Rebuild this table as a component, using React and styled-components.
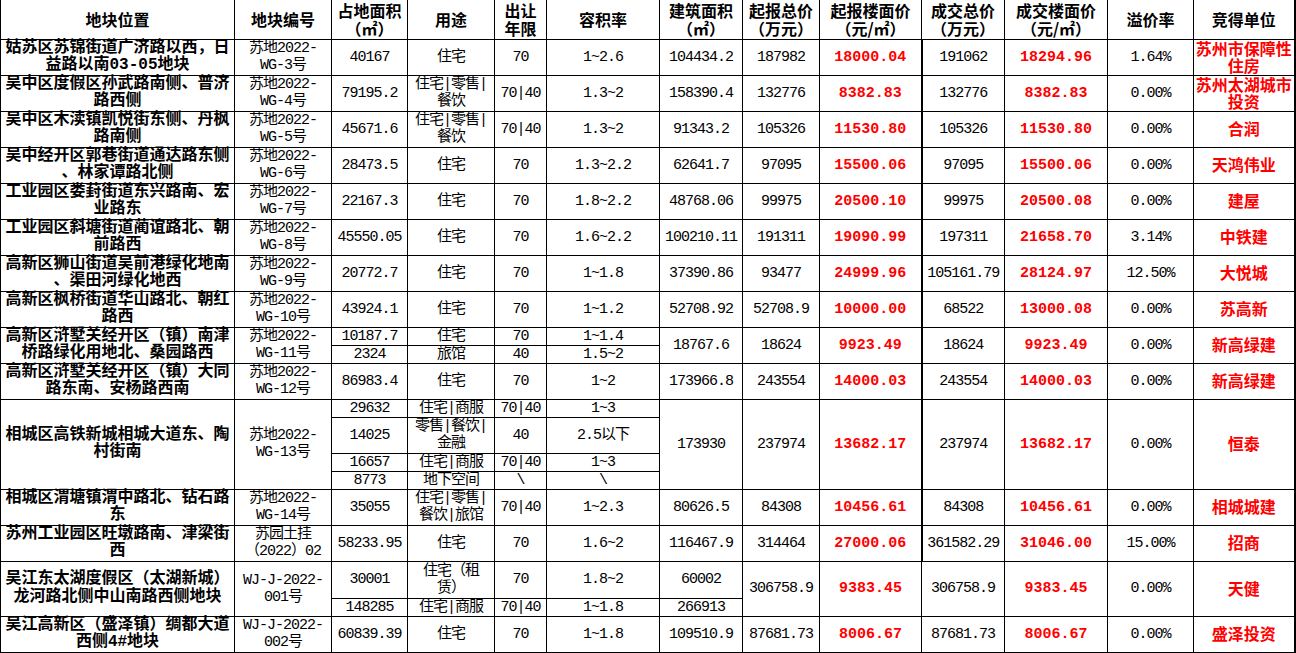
import React from 'react';
import styled, { createGlobalStyle, css } from 'styled-components';

const Global = createGlobalStyle`
  html, body { margin: 0; padding: 0; background: #fff; }
  body { font-family: "Noto Sans CJK SC", sans-serif; color: #000; }
`;

const Sheet = styled.table`
  width: 1294px;
  table-layout: fixed;
  border-collapse: collapse;
  border-right: 2px solid #000;
  border-bottom: 2px solid #000;
  color: #000;
`;

const Row = styled.tr`
  height: ${p => p.$h}px;
`;

const Head = styled.th`
  border: 1px solid #000;
  border-top: none;
  padding: 0;
  font-family: "Noto Sans CJK SC", sans-serif;
  font-weight: 700;
  font-size: 16px;
  line-height: 18px;
  white-space: pre;
  text-align: center;
  vertical-align: middle;
`;

const Cell = styled.td`
  border: 1px solid #000;
  padding: 0;
  text-align: center;
  vertical-align: middle;
  white-space: pre;
  font-family: "Liberation Mono", "Noto Sans CJK SC", monospace;
  font-size: 15px;
  line-height: 17px;
  letter-spacing: -1px;
  ${p => p.$kind === 'place' && css`
    font-size: 16px;
    font-weight: 700;
    line-height: 17.5px;
    letter-spacing: 0;
  `}
  ${p => p.$kind === 'price' && css`
    color: #f00;
    font-weight: 700;
    letter-spacing: 0;
  `}
  ${p => p.$kind === 'winner' && css`
    color: #f00;
    font-weight: 700;
    font-size: 16px;
    line-height: 17.5px;
    letter-spacing: 0;
    font-family: "Noto Sans CJK SC", sans-serif;
  `}
  ${p => p.$thick && css`border-left: 2px solid #000;`}
`;

const widths = [234, 97, 76, 87, 52, 113, 83, 77, 102, 83, 103, 86, 101];

const headers = [
  '地块位置', '地块编号', '占地面积\n（㎡）', '用途', '出让\n年限', '容积率',
  '建筑面积\n（㎡）', '起报总价\n（万元）', '起报楼面价\n（元/㎡）', '成交总价\n（万元）',
  '成交楼面价\n（元/㎡）', '溢价率', '竞得单位',
];

const one = (area, use, term, far) => [{ h: 36, area, use, term, far }];

const groups = [
  { place: '姑苏区苏锦街道广济路以西，日\n益路以南03-05地块', code: '苏地2022-\nWG-3号', subs: one('40167', '住宅', '70', '1~2.6'), build: '104434.2', start: '187982', startP: '18000.04', deal: '191062', dealP: '18294.96', prem: '1.64%', win: '苏州市保障性\n住房' },
  { place: '吴中区度假区孙武路南侧、普济\n路西侧', code: '苏地2022-\nWG-4号', subs: one('79195.2', '住宅|零售|\n餐饮', '70|40', '1.3~2'), build: '158390.4', start: '132776', startP: '8382.83', deal: '132776', dealP: '8382.83', prem: '0.00%', win: '苏州太湖城市\n投资' },
  { place: '吴中区木渎镇凯悦街东侧、丹枫\n路南侧', code: '苏地2022-\nWG-5号', subs: one('45671.6', '住宅|零售|\n餐饮', '70|40', '1.3~2'), build: '91343.2', start: '105326', startP: '11530.80', deal: '105326', dealP: '11530.80', prem: '0.00%', win: '合润' },
  { place: '吴中经开区郭巷街道通达路东侧\n、林家谭路北侧', code: '苏地2022-\nWG-6号', subs: one('28473.5', '住宅', '70', '1.3~2.2'), build: '62641.7', start: '97095', startP: '15500.06', deal: '97095', dealP: '15500.06', prem: '0.00%', win: '天鸿伟业' },
  { place: '工业园区娄葑街道东兴路南、宏\n业路东', code: '苏地2022-\nWG-7号', subs: one('22167.3', '住宅', '70', '1.8~2.2'), build: '48768.06', start: '99975', startP: '20500.10', deal: '99975', dealP: '20500.08', prem: '0.00%', win: '建屋' },
  { place: '工业园区斜塘街道蔺谊路北、朝\n前路西', code: '苏地2022-\nWG-8号', subs: one('45550.05', '住宅', '70', '1.6~2.2'), build: '100210.11', start: '191311', startP: '19090.99', deal: '197311', dealP: '21658.70', prem: '3.14%', win: '中铁建' },
  { place: '高新区狮山街道吴前港绿化地南\n、渠田河绿化地西', code: '苏地2022-\nWG-9号', subs: one('20772.7', '住宅', '70', '1~1.8'), build: '37390.86', start: '93477', startP: '24999.96', deal: '105161.79', dealP: '28124.97', prem: '12.50%', win: '大悦城' },
  { place: '高新区枫桥街道华山路北、朝红\n路西', code: '苏地2022-\nWG-10号', subs: one('43924.1', '住宅', '70', '1~1.2'), build: '52708.92', start: '52708.9', startP: '10000.00', deal: '68522', dealP: '13000.08', prem: '0.00%', win: '苏高新' },
  { place: '高新区浒墅关经开区（镇）南津\n桥路绿化用地北、桑园路西', code: '苏地2022-\nWG-11号', subs: [
    { h: 18, area: '10187.7', use: '住宅', term: '70', far: '1~1.4' },
    { h: 18, area: '2324', use: '旅馆', term: '40', far: '1.5~2' },
  ], build: '18767.6', start: '18624', startP: '9923.49', deal: '18624', dealP: '9923.49', prem: '0.00%', win: '新高绿建' },
  { place: '高新区浒墅关经开区（镇）大同\n路东南、安杨路西南', code: '苏地2022-\nWG-12号', subs: one('86983.4', '住宅', '70', '1~2'), build: '173966.8', start: '243554', startP: '14000.03', deal: '243554', dealP: '14000.03', prem: '0.00%', win: '新高绿建' },
  { place: '相城区高铁新城相城大道东、陶\n村街南', code: '苏地2022-\nWG-13号', subs: [
    { h: 18, area: '29632', use: '住宅|商服', term: '70|40', far: '1~3' },
    { h: 36, area: '14025', use: '零售|餐饮|\n金融', term: '40', far: '2.5以下' },
    { h: 18, area: '16657', use: '住宅|商服', term: '70|40', far: '1~3' },
    { h: 18, area: '8773', use: '地下空间', term: '\\', far: '\\' },
  ], build: '173930', start: '237974', startP: '13682.17', deal: '237974', dealP: '13682.17', prem: '0.00%', win: '恒泰' },
  { place: '相城区渭塘镇渭中路北、钻石路\n东', code: '苏地2022-\nWG-14号', subs: one('35055', '住宅|零售|\n餐饮|旅馆', '70|40', '1~2.3'), build: '80626.5', start: '84308', startP: '10456.61', deal: '84308', dealP: '10456.61', prem: '0.00%', win: '相城城建' },
  { place: '苏州工业园区旺墩路南、津梁街\n西', code: '苏园土挂\n（2022）02', subs: one('58233.95', '住宅', '70', '1.6~2'), build: '116467.9', start: '314464', startP: '27000.06', deal: '361582.29', dealP: '31046.00', prem: '15.00%', win: '招商' },
  { place: '吴江东太湖度假区（太湖新城）\n龙河路北侧中山南路西侧地块', code: 'WJ-J-2022-\n001号', subs: [
    { h: 37, area: '30001', use: '住宅（租\n赁）', term: '70', far: '1.8~2', build: '60002' },
    { h: 18, area: '148285', use: '住宅|商服', term: '70|40', far: '1~1.8', build: '266913' },
  ], start: '306758.9', startP: '9383.45', deal: '306758.9', dealP: '9383.45', prem: '0.00%', win: '天健' },
  { place: '吴江高新区（盛泽镇）绸都大道\n西侧4#地块', code: 'WJ-J-2022-\n002号', subs: one('60839.39', '住宅', '70', '1~1.8'), build: '109510.9', start: '87681.73', startP: '8006.67', deal: '87681.73', dealP: '8006.67', prem: '0.00%', win: '盛泽投资' },
];

function Group({ g, thick }) {
  const n = g.subs.length;
  return g.subs.map((s, i) => (
    <Row key={i} $h={s.h}>
      {i === 0 && <Cell rowSpan={n} $kind="place">{g.place}</Cell>}
      {i === 0 && <Cell rowSpan={n}>{g.code}</Cell>}
      <Cell>{s.area}</Cell>
      <Cell>{s.use}</Cell>
      <Cell>{s.term}</Cell>
      <Cell>{s.far}</Cell>
      {s.build !== undefined && <Cell>{s.build}</Cell>}
      {i === 0 && g.build !== undefined && <Cell rowSpan={n}>{g.build}</Cell>}
      {i === 0 && (
        <>
          <Cell rowSpan={n}>{g.start}</Cell>
          <Cell rowSpan={n} $kind="price">{g.startP}</Cell>
          <Cell rowSpan={n} $thick={thick}>{g.deal}</Cell>
          <Cell rowSpan={n} $kind="price">{g.dealP}</Cell>
          <Cell rowSpan={n}>{g.prem}</Cell>
          <Cell rowSpan={n} $kind="winner">{g.win}</Cell>
        </>
      )}
    </Row>
  ));
}

export default function App() {
  return (
    <>
      <Global />
      <Sheet>
        <colgroup>
          {widths.map((w, i) => <col key={i} style={{ width: w }} />)}
        </colgroup>
        <thead>
          <Row $h={39}>
            {headers.map((h, i) => <Head key={i}>{h}</Head>)}
          </Row>
        </thead>
        <tbody>
          {groups.map((g, i) => <Group key={i} g={g} thick={i < 13} />)}
        </tbody>
      </Sheet>
    </>
  );
}
